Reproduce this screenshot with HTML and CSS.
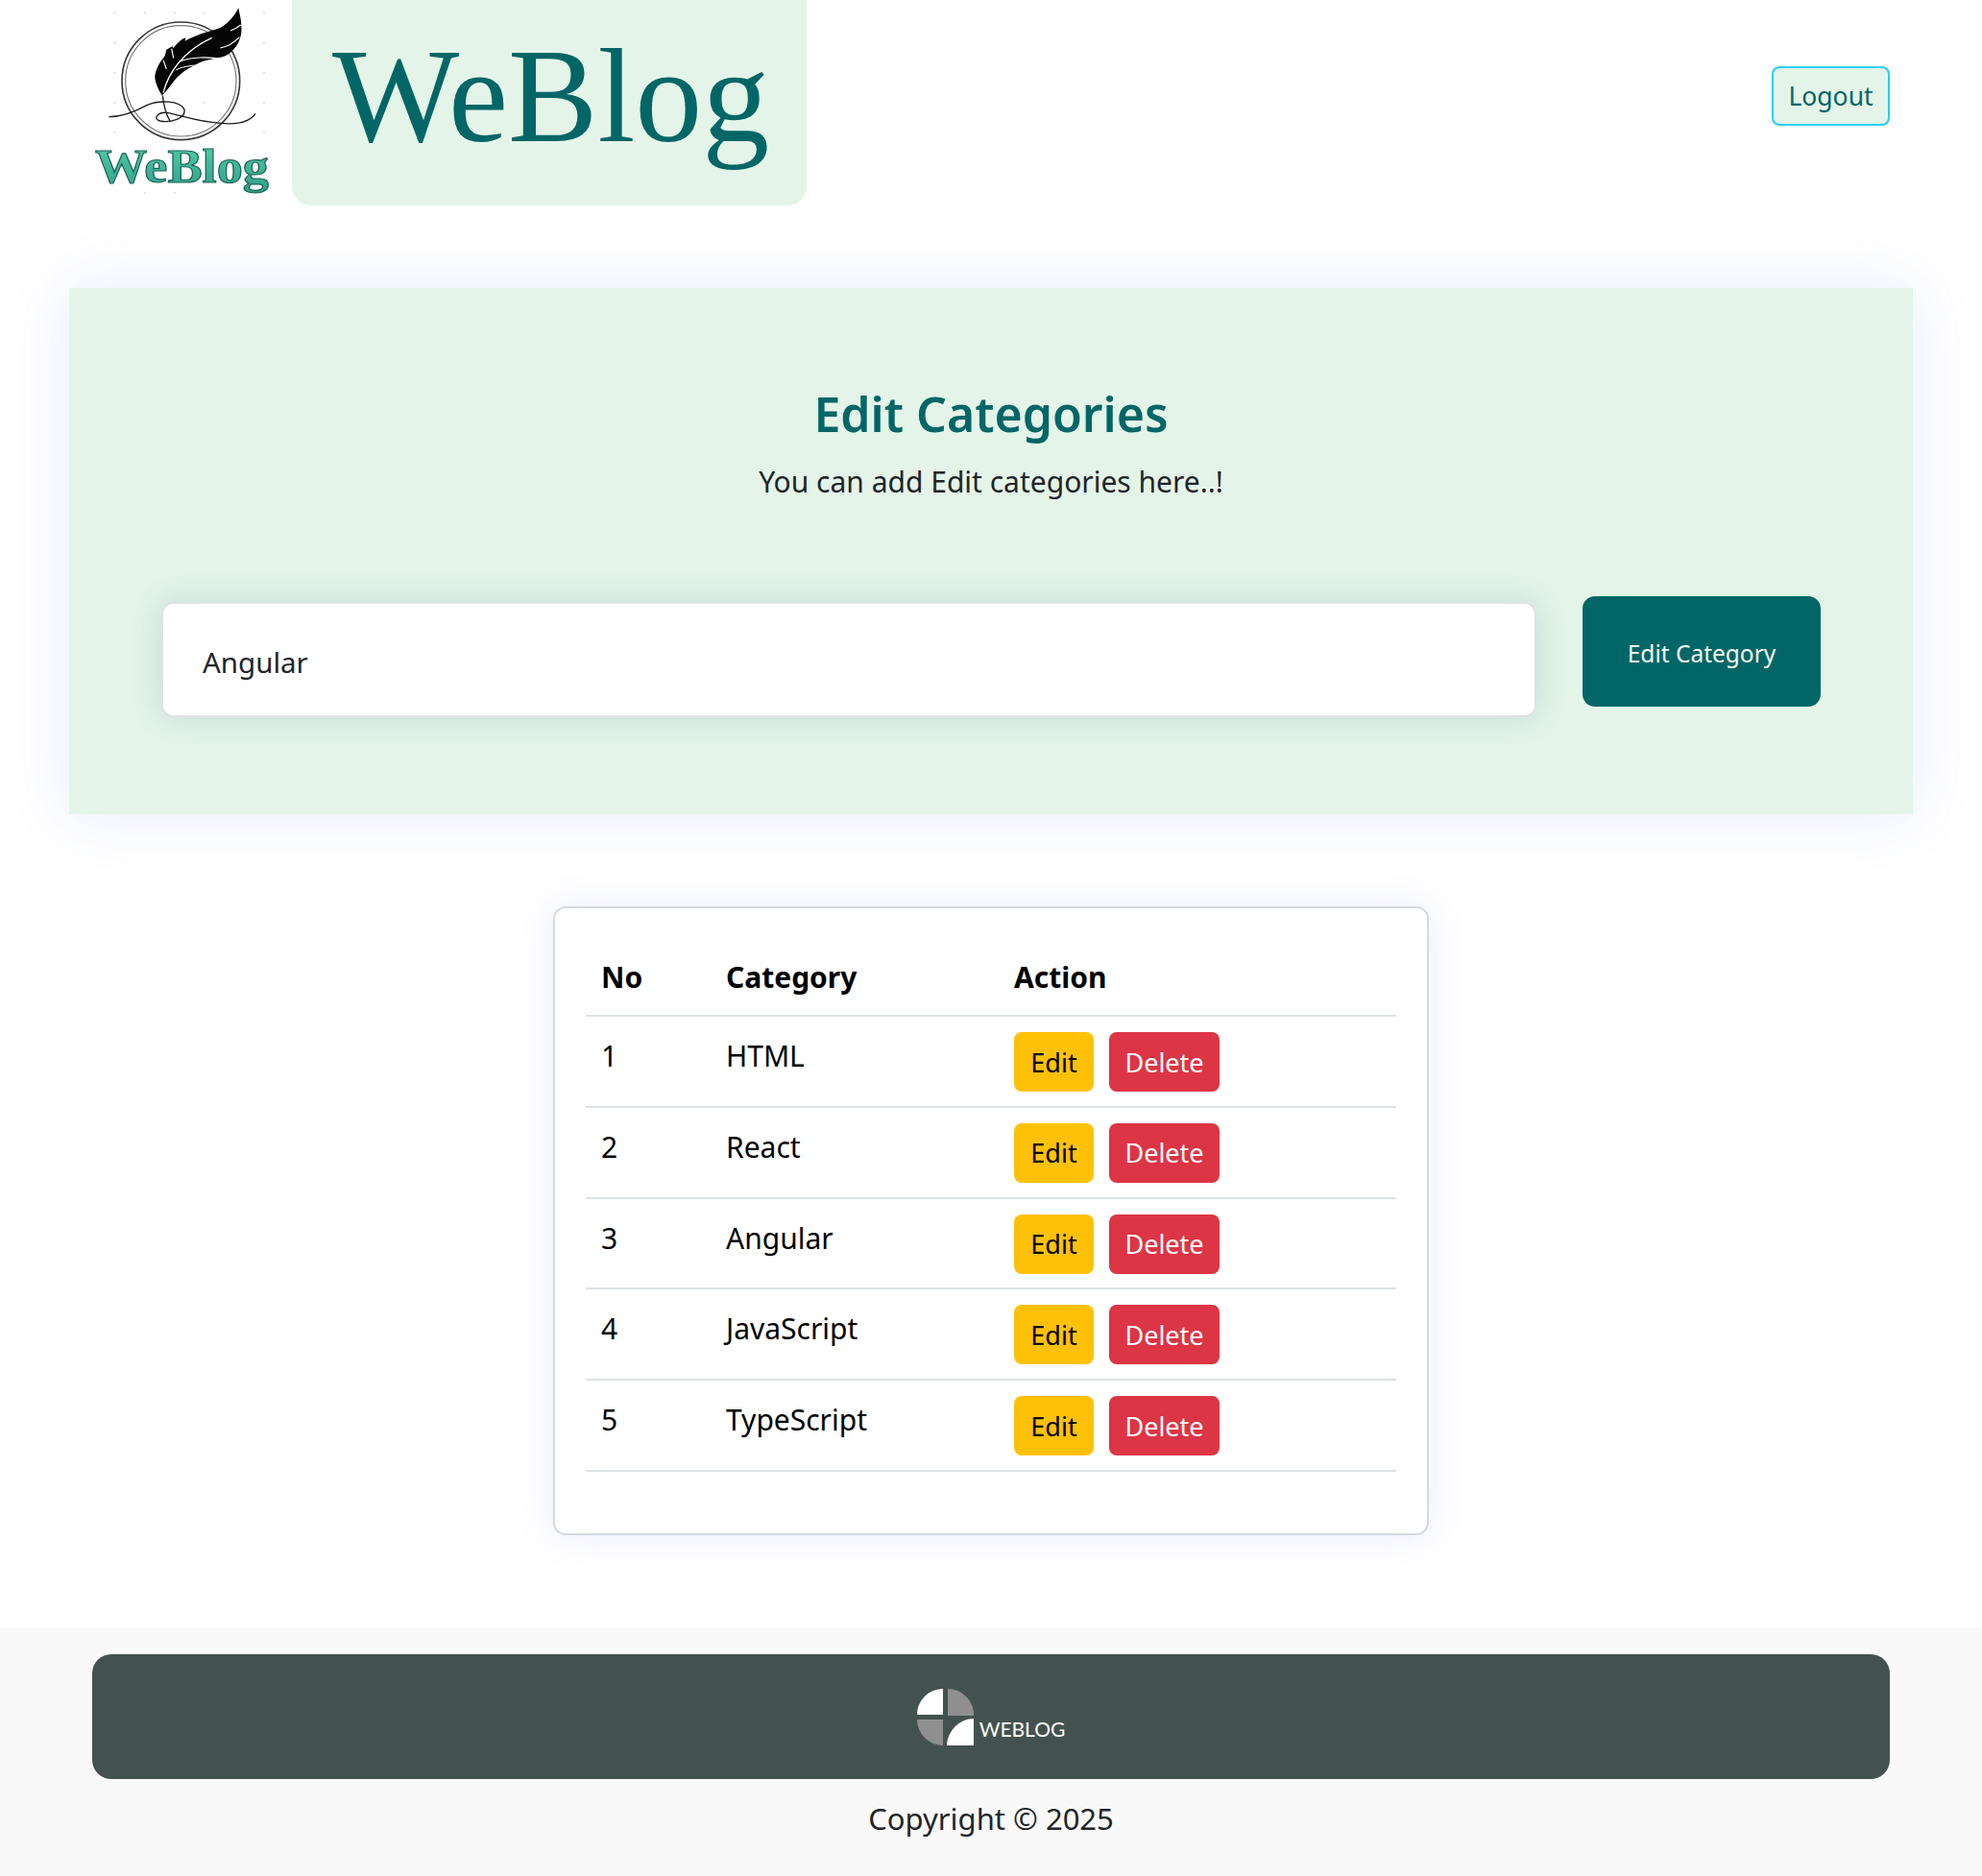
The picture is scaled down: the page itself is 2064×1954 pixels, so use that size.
FILE: index.html
```html
<!DOCTYPE html>
<html lang="en">
<head>
  <meta charset="UTF-8">
  <meta name="viewport" content="width=device-width, initial-scale=1.0">
  <title>WeBlog - Edit Categories</title>
  <link rel="stylesheet" href="styles.css">
</head>
<body>
  <header class="topbar">
    <svg class="logo" viewBox="0 0 630 630" width="210" height="210" role="img" aria-label="WeBlog logo">
      <defs>
        <linearGradient id="logoFill" x1="0" y1="0" x2="0" y2="1">
          <stop offset="0" stop-color="#55d0a8"/>
          <stop offset="1" stop-color="#2f9f88"/>
        </linearGradient>
      </defs>
      <g fill="#d8d8d8">
        <circle cx="88" cy="40" r="3"/><circle cx="182" cy="40" r="3"/><circle cx="275" cy="40" r="3"/><circle cx="368" cy="40" r="3"/><circle cx="555" cy="40" r="3"/>
        <circle cx="88" cy="135" r="3"/><circle cx="555" cy="135" r="3"/><circle cx="88" cy="228" r="3"/><circle cx="555" cy="228" r="3"/>
        <circle cx="88" cy="320" r="3"/><circle cx="368" cy="320" r="3"/><circle cx="555" cy="320" r="3"/><circle cx="88" cy="414" r="3"/><circle cx="555" cy="414" r="3"/>
        <circle cx="182" cy="602" r="3"/><circle cx="275" cy="602" r="3"/>
      </g>
      <circle cx="295" cy="253" r="184" fill="none" stroke="#3a3a3a" stroke-width="5"/>
      <circle cx="295" cy="253" r="173" fill="none" stroke="#777" stroke-width="3.5"/>
      <path d="M475 25 C478 45 484 60 484 82 C486 100 482 125 468 145 C455 160 445 172 425 178 C400 184 372 186 345 200 C315 215 290 230 270 258 C258 275 245 290 236 298 C225 280 212 255 214 235 C218 215 228 195 245 175 L250 155 L268 145 L272 150 C285 135 295 122 310 118 L308 128 C335 112 375 100 410 90 C435 82 460 55 475 25 Z" fill="#050505"/>
      <path d="M240 290 C255 230 300 160 392 118" fill="none" stroke="#fff" stroke-width="4"/>
      <path d="M292 192 C325 178 380 176 428 186 M280 218 C300 208 325 204 350 204 M418 150 C440 146 460 135 478 116 M450 96 C460 92 472 86 482 78 M240 188 L250 216 M266 152 L272 182" fill="none" stroke="#fff" stroke-width="3.5"/>
      <path d="M238 298 C240 320 245 350 262 380" fill="none" stroke="#1d1d1d" stroke-width="4"/>
      <path d="M70 365 C110 365 150 350 190 328 C230 312 290 315 305 340 C315 370 260 385 230 378 C205 370 225 350 250 352 C300 360 340 380 420 385 C470 390 510 380 528 355" fill="none" stroke="#1d1d1d" stroke-width="4"/>
      <text class="logo-text" x="27" y="570" textLength="543" lengthAdjust="spacingAndGlyphs">WeBlog</text>
    </svg>
    <div class="brand"><span class="brand-name">WeBlog</span></div>
    <button class="logout" type="button">Logout</button>
  </header>

  <section class="hero">
    <h1>Edit Categories</h1>
    <p>You can add Edit categories here..!</p>
    <form class="category-form">
      <input class="category-input" type="text" value="Angular">
      <button class="submit-btn" type="button">Edit Category</button>
    </form>
  </section>

  <section class="card">
    <table class="category-table">
      <colgroup>
        <col class="col-no">
        <col class="col-name">
        <col>
      </colgroup>
      <thead>
        <tr><th>No</th><th>Category</th><th>Action</th></tr>
      </thead>
      <tbody>
        <tr>
          <td>1</td><td>HTML</td>
          <td><button class="btn btn-edit" type="button">Edit</button><button class="btn btn-delete" type="button">Delete</button></td>
        </tr>
        <tr>
          <td>2</td><td>React</td>
          <td><button class="btn btn-edit" type="button">Edit</button><button class="btn btn-delete" type="button">Delete</button></td>
        </tr>
        <tr>
          <td>3</td><td>Angular</td>
          <td><button class="btn btn-edit" type="button">Edit</button><button class="btn btn-delete" type="button">Delete</button></td>
        </tr>
        <tr>
          <td>4</td><td>JavaScript</td>
          <td><button class="btn btn-edit" type="button">Edit</button><button class="btn btn-delete" type="button">Delete</button></td>
        </tr>
        <tr>
          <td>5</td><td>TypeScript</td>
          <td><button class="btn btn-edit" type="button">Edit</button><button class="btn btn-delete" type="button">Delete</button></td>
        </tr>
      </tbody>
    </table>
  </section>

  <footer class="footer">
    <div class="footer-bar">
      <svg class="footer-icon" viewBox="0 0 59 59" width="59" height="59" aria-hidden="true">
        <path d="M27 0 V27 H1 Q0 27 0 26 A27 27 0 0 1 26 0 Z" fill="#fff"/>
        <path d="M32 0 A27 27 0 0 1 59 27 V28 H32 Z" fill="#8f8f8f"/>
        <path d="M0 32 H27 V59 A27 27 0 0 1 0 32 Z" fill="#8f8f8f"/>
        <path d="M59 31 V58 Q59 59 58 59 H32 Q31 59 31 58 A29 29 0 0 1 58 31 Z" fill="#fff"/>
      </svg>
      <span class="footer-name">WEBLOG</span>
    </div>
    <p class="copyright">Copyright © 2025</p>
  </footer>
</body>
</html>
```

FILE: styles.css
```css
* {
  margin: 0;
  padding: 0;
  box-sizing: border-box;
}

body {
  font-family: "Noto Sans", "Open Sans", sans-serif;
  background-color: #fff;
  color: #212529;
}

.topbar {
  display: flex;
  align-items: flex-start;
  padding: 0 96px 0 90px;
}

.logo {
  flex: none;
  margin-right: 4px;
}

.logo-text {
  font-family: "Liberation Serif", serif;
  font-weight: 700;
  font-size: 150px;
  fill: url(#logoFill);
  stroke: #1d5f56;
  stroke-width: 3.5;
}

.brand {
  width: 536px;
  height: 214px;
  background-color: #e4f4e9;
  border-radius: 0 0 20px 20px;
  padding-left: 42px;
}

.brand-name {
  font-family: "Liberation Serif", serif;
  font-size: 140px;
  line-height: 200px;
  color: #036666;
}

.logout {
  margin: 69px 0 0 auto;
  width: 123px;
  height: 62px;
  font-family: inherit;
  font-size: 26.5px;
  color: #036666;
  background-color: #e4f4e9;
  border: 2px solid #1fd0f0;
  border-radius: 8px;
}

.hero {
  margin: 86px 72px 0;
  height: 548px;
  padding-top: 98px;
  background-color: #e4f4e9;
  text-align: center;
  box-shadow: 0 0 60px rgba(80, 100, 255, 0.13);
}

.hero h1 {
  font-size: 50px;
  line-height: 66px;
  font-weight: 600;
  color: #036666;
}

.hero p {
  margin-top: 15px;
  font-size: 30px;
  line-height: 46px;
}

.category-form {
  display: flex;
  align-items: flex-start;
  gap: 48px;
  margin-top: 96px;
  padding: 0 96px;
}

.category-input {
  flex: 1;
  height: 120px;
  margin-top: 6px;
  padding: 5px 41px 0;
  font-family: inherit;
  font-size: 29.5px;
  color: #212529;
  background-color: #fff;
  border: 2px solid #dee2e6;
  border-radius: 12px;
  box-shadow: 0 0 32px rgba(3, 102, 120, 0.16);
}

.submit-btn {
  flex: none;
  width: 248px;
  height: 115px;
  padding-top: 3px;
  font-family: inherit;
  font-size: 24.5px;
  color: #f4f9f2;
  background-color: #036666;
  border: none;
  border-radius: 13px;
}

.card {
  width: 912px;
  height: 655px;
  margin: 96px auto 0;
  padding: 32px;
  background-color: #fff;
  border: 2px solid #d6d9de;
  border-radius: 13px;
  box-shadow: 0 0 40px rgba(80, 100, 255, 0.12);
}

.category-table {
  width: 100%;
  table-layout: fixed;
  border-collapse: collapse;
  color: #000;
}

.col-no {
  width: 129px;
}

.col-name {
  width: 300px;
}

.category-table th {
  height: 80px;
  padding: 0 16px 0 17px;
  font-size: 30px;
  font-weight: 700;
  text-align: left;
  border-bottom: 2px solid #dee2e6;
}

.category-table td {
  height: 94.8px;
  padding: 16px 17px 0;
  font-size: 30px;
  line-height: 50px;
  vertical-align: top;
  border-bottom: 2px solid #dee2e6;
}

.category-table th:first-child,
.category-table td:first-child {
  padding-left: 16px;
}

.btn {
  height: 62px;
  font-family: inherit;
  font-size: 27px;
  border: none;
  border-radius: 8px;
  vertical-align: top;
}

.btn-edit {
  width: 83px;
  color: #000;
  background-color: #ffc107;
}

.btn-delete {
  width: 115px;
  margin-left: 16px;
  color: #fff;
  background-color: #dc3545;
}

.footer {
  margin-top: 96px;
  height: 259px;
  padding: 28px 96px 0;
  background-color: #f9f9f9;
}

.footer-bar {
  display: flex;
  justify-content: center;
  align-items: flex-end;
  gap: 6px;
  height: 130px;
  padding-bottom: 35px;
  background-color: #43524e;
  border-radius: 20px;
}

.footer-name {
  margin-bottom: 3px;
  font-family: Lato, sans-serif;
  font-size: 21px;
  line-height: 28px;
  color: #fff;
}

.copyright {
  margin-top: 18px;
  font-size: 31px;
  line-height: 46px;
  text-align: center;
}
```
